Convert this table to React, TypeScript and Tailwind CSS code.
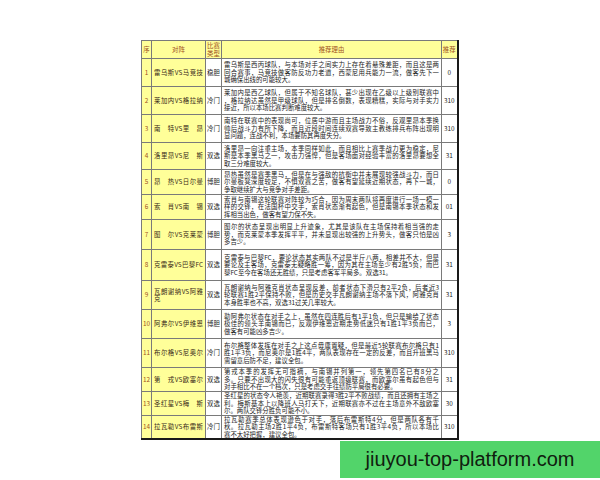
import React from 'react';

type Row = {
  no: number;
  match: string;
  type: string;
  rec: string;
  h: string;
  lines: string[];
};

const rows: Row[] = [
  {
    no: 1,
    match: '雷乌斯VS马竞技',
    type: '稳胆',
    rec: '0',
    h: 'h-[28px]',
    lines: [
      '雷乌斯是西丙球队，与本场对手之间实力上存在着悬殊差距，而且这是两',
      '回合赛事，马竞技做客防反功力老道，西蒙尼用兵能力一流，做客先下一',
      '城确保出线的可能较大。',
    ],
  },
  {
    no: 2,
    match: '莱加内VS格拉纳',
    type: '冷门',
    rec: '310',
    h: 'h-[28px]',
    lines: [
      '莱加内是西乙球队，但属于不知名球队，甚少出现在乙级以上级别联赛中',
      '，格拉纳达虽然是甲级球队，但是排名倒数，表现糟糕，实际与对手实力',
      '接近，所以本场比赛判断难度较大。',
    ],
  },
  {
    no: 3,
    match: '南　特VS里　昂',
    type: '冷门',
    rec: '310',
    h: 'h-[28px]',
    lines: [
      '南特在联赛中的表现尚可，位居中游而且主场战力不俗，反观里昂本季换',
      '帅后战斗力有所下降，而且近段时间连续双赛导致主教练排兵布阵出现明',
      '显问题，连战不利，本场要防其再度失分。',
    ],
  },
  {
    no: 4,
    match: '洛里昂VS尼　斯',
    type: '双选',
    rec: '31',
    h: 'h-[27px]',
    lines: [
      '洛里昂一向注重主场，本季同样如此，而且相比上赛季战力更为稳定，尼',
      '斯是本季黑马之一，攻击力强悍，但是客场面对经验丰富的洛里昂要想全',
      '取三分难度较大。',
    ],
  },
  {
    no: 5,
    match: '昂　热VS日尔曼',
    type: '博胆',
    rec: '0',
    h: 'h-[25px]',
    lines: [
      '昂热虽然是赛季黑马，但是在与强敌的抗衡中并未展现较强战斗力，而日',
      '尔曼板凳深度较足，不惧双赛之苦，做客有望延续近期状态，再下一城，',
      '争取继续扩大与竞争对手差距。',
    ],
  },
  {
    no: 6,
    match: '索　肖VS南　锡',
    type: '双选',
    rec: '01',
    h: 'h-[25px]',
    lines: [
      '索肖与南锡这轮联赛对阵较为巧合，因为周末两队将再度进行一场一模一',
      '样的交锋，在法国杯中交手，索肖状态渐有起色，但是南锡本季状态和发',
      '挥相当出色，做客有望力保不失。',
    ],
  },
  {
    no: 7,
    match: '图　尔VS克莱蒙',
    type: '博胆',
    rec: '3',
    h: 'h-[30px]',
    lines: [
      '图尔的状态呈现出明显上升迹象，尤其是该队在主场保持着相当强的走',
      '势，而克莱蒙本季发挥平平，并未显现出较强的上升势头，做客只怕是凶',
      '多吉少。',
    ],
  },
  {
    no: 8,
    match: '克雷泰VS巴黎FC',
    type: '双选',
    rec: '31',
    h: 'h-[31px]',
    lines: [
      '克雷泰与巴黎FC，要论状态其实两队不过是半斤八两，相差并不大，但是',
      '要论及主客场，克雷泰无疑略胜一筹，因为其在主场至少有2胜5负，而巴',
      '黎FC至今在客场还无胜绩，只是考虑客军平局多。双选31。',
    ],
  },
  {
    no: 9,
    match: '瓦朗谢纳VS阿雅克',
    type: '双选',
    rec: '31',
    h: 'h-[29px]',
    lines: [
      '瓦朗谢纳与阿雅克肖状态呈现反差，前者状态下滑只有2平2负，后者近3',
      '轮联赛1胜2平保持不败，但是历史交手瓦朗谢纳主场不落下风，阿雅克肖',
      '本身胜率也不高，双选31过关几率较大。',
    ],
  },
  {
    no: 10,
    match: '阿弗尔VS伊维恩',
    type: '博胆',
    rec: '3',
    h: 'h-[29px]',
    lines: [
      '勒阿弗尔状态在对手之上，虽然在四连胜后有1平1负，但只是输给了状态',
      '极佳的领头羊南锡而已，反观伊维恩近期走势低迷只有1胜1平3负而已，',
      '做客有可能凶多吉少。',
    ],
  },
  {
    no: 11,
    match: '布尔格VS尼奥尔',
    type: '冷门',
    rec: '310',
    h: 'h-[29px]',
    lines: [
      '布尔格整体发挥在对手之上这点毋庸置疑，但是最近5轮联赛布尔格只有1',
      '胜1平3负，而尼奥尔是1胜4平，两队表现存在一定的反差，而且升班黑马',
      '需留意后防不足，建议全包。',
    ],
  },
  {
    no: 12,
    match: '第　戎VS欧塞尔',
    type: '双选',
    rec: '31',
    h: 'h-[24px]',
    lines: [
      '第戎本季的发挥无可指摘，与南锡并列第一，领先第四名已有8分之',
      '多。只要不出现大的闪失很有可能重返顶级联赛，而欧塞尔虽有起色但与',
      '对手相比不在一个档次，只是考虑交手往绩防平局很有必要。',
    ],
  },
  {
    no: 13,
    match: '圣红星VS梅　斯',
    type: '双选',
    rec: '30',
    h: 'h-[23px]',
    lines: [
      '圣红星的状态令人艳羡，近期联赛录得3胜2平不败战绩，而且还拥有主场之',
      '利。梅斯基本上以降班人马打天下，近期联赛亦不过在主场意外不敌欧塞',
      '尔。两队交锋分胜负可能不小。',
    ],
  },
  {
    no: 14,
    match: '拉瓦勒VS布雷斯',
    type: '冷门',
    rec: '310',
    h: 'h-[24px]',
    lines: [
      '拉瓦勒赛季总体表现逊色于对手，落后布雷斯特4分，但是两队各有千',
      '秋。拉瓦勒主场2胜1平4负，布雷斯特客场只有1胜3平4负，所以本场比',
      '赛不太好把握，建议全包。',
    ],
  },
];

export default function App() {
  return (
    <div className="relative h-[480px] w-[600px] overflow-hidden bg-white pl-[141px] pt-[40px] font-['Noto_Sans_CJK_SC','Liberation_Sans',sans-serif] text-[6.4px] leading-[7.5px]">
      <table className="table-fixed border-collapse border-b-2 border-r-2 border-[#1a1a1a]">
        <colgroup>
          <col className="w-[10px]" />
          <col className="w-[54px]" />
          <col className="w-[16px]" />
          <col className="w-[220px]" />
          <col className="w-[16px]" />
        </colgroup>
        <thead>
          {/* Header */}
          <tr className="h-[18px] bg-[#ffff99] text-[#a0501e]">
            <th className="border border-[#7a7a7a] p-0 font-normal">序</th>
            <th className="border border-[#7a7a7a] p-0 font-normal">对阵</th>
            <th className="border border-[#7a7a7a] p-0 font-normal">
              <div>比赛</div>
              <div>类型</div>
            </th>
            <th className="border border-[#7a7a7a] p-0 font-normal">推荐理由</th>
            <th className="border border-[#7a7a7a] p-0 font-normal">推荐</th>
          </tr>
        </thead>
        <tbody>
          {rows.map((r) => (
            <tr key={r.no} className={r.h}>
              <td className="border border-[#7a7a7a] bg-[#ffff99] p-0 text-center text-[#a0501e]">
                {r.no}
              </td>
              <td className="border border-[#7a7a7a] bg-[#ffff99] px-[2px] py-0 text-[#3a2a18]">
                <div className="overflow-hidden text-justify [text-align-last:justify]">{r.match}</div>
              </td>
              <td className="border border-[#7a7a7a] p-0 text-center text-[#222]">
                <div className="whitespace-nowrap">{r.type}</div>
              </td>
              <td className="border border-[#7a7a7a] px-[2px] py-0 text-[#222]">
                {r.lines.map((line, i) => (
                  <div
                    key={i}
                    className={
                      i < r.lines.length - 1
                        ? 'text-justify [text-align-last:justify]'
                        : 'whitespace-nowrap'
                    }
                  >
                    {line}
                  </div>
                ))}
              </td>
              <td className="border border-[#7a7a7a] p-0 text-center text-[#222]">{r.rec}</td>
            </tr>
          ))}
        </tbody>
      </table>

      {/* watermark */}
      <div className="absolute left-[340px] top-[441px] flex h-[37px] w-[260px] items-center justify-center bg-[#52d46a] font-['Liberation_Sans',sans-serif] text-[20px] text-[#10200f]">
        jiuyou-top-platform.com
      </div>
    </div>
  );
}
